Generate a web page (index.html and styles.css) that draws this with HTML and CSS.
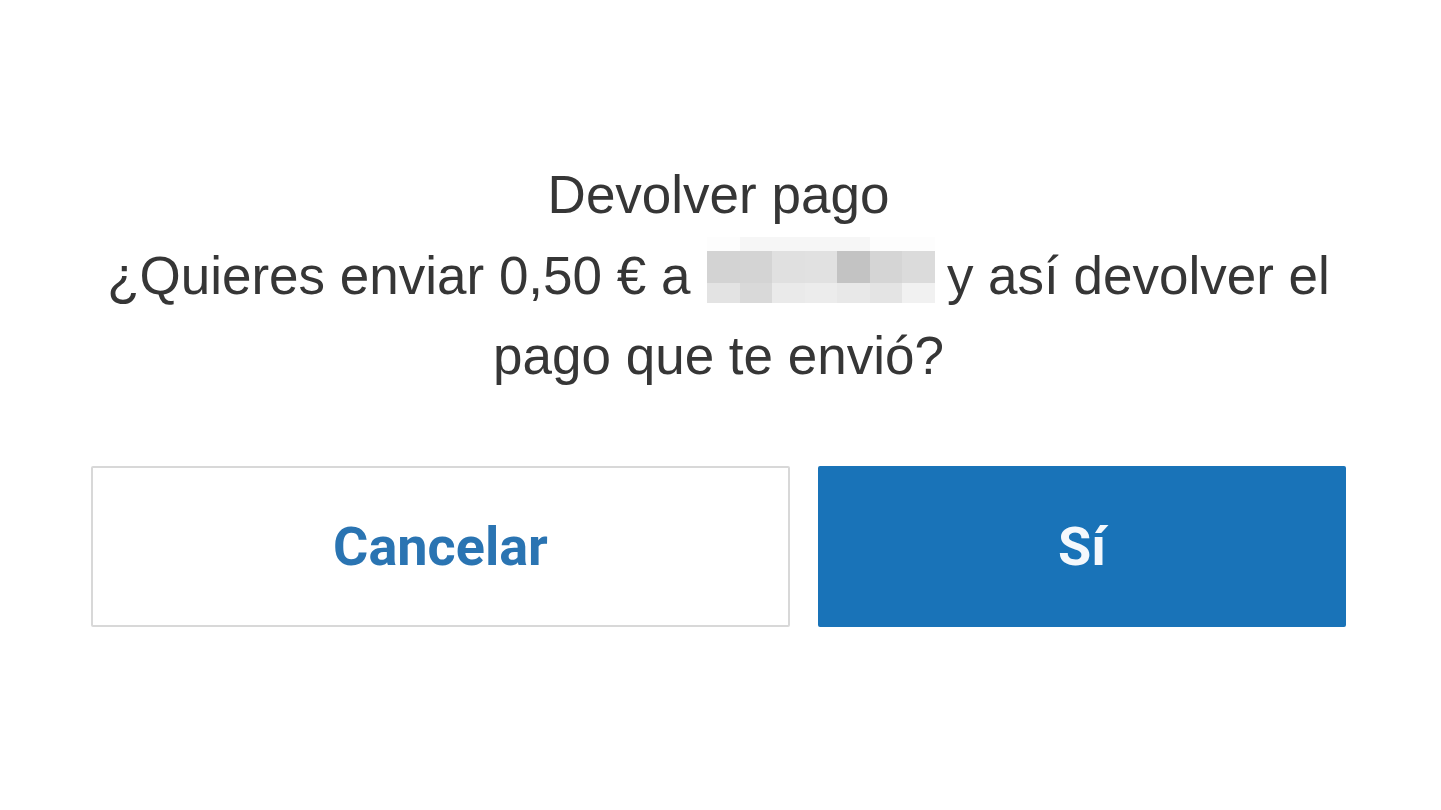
FILE: index.html
```html
<!DOCTYPE html>
<html lang="es">
<head>
<meta charset="utf-8">
<title>Devolver pago</title>
<link rel="stylesheet" href="styles.css">
</head>
<body>
<main class="dialog">
  <h1 class="title">Devolver pago</h1>
  <p class="message">¿Quieres enviar 0,50 € a <span class="blur"><span class="blur-grid"><span class="px t1"></span><span class="px t2"></span><span class="px t2"></span><span class="px t2"></span><span class="px t2"></span><span class="px t1"></span><span class="px t1"></span><span class="px a1"></span><span class="px a2"></span><span class="px a3"></span><span class="px a4"></span><span class="px a5"></span><span class="px a6"></span><span class="px a7"></span><span class="px b1"></span><span class="px b2"></span><span class="px b3"></span><span class="px b4"></span><span class="px b5"></span><span class="px b6"></span><span class="px b7"></span></span></span> y así devolver el pago que te envió?</p>
  <div class="actions">
    <button class="btn btn-secondary" type="button">Cancelar</button>
    <button class="btn btn-primary" type="button">Sí</button>
  </div>
</main>
</body>
</html>
```

FILE: styles.css
```css
html, body {
  margin: 0;
  padding: 0;
  background: #ffffff;
}

body {
  font-family: "Liberation Sans", Arial, sans-serif;
  color: #363636;
}

.dialog {
  width: 1255px;
  margin-left: 91px;
  padding-top: 154px;
}

.title {
  margin: 0;
  font-size: 53px;
  font-weight: 400;
  line-height: 82px;
  text-align: center;
}

.message {
  margin: 0;
  font-size: 53px;
  line-height: 80px;
  text-align: center;
}

.blur {
  display: inline-block;
  width: 228px;
  height: 66px;
  overflow: hidden;
  vertical-align: -9px;
  margin: 0 -3px 0 2px;
}

.blur-grid {
  display: grid;
  grid-template-columns: repeat(7, 32.5px);
  grid-template-rows: 14px 32px 20px;
  height: 66px;
}

.px { display: block; }
.t1 { background: #fdfdfd; }
.t2 { background: #f6f6f6; }
.a1 { background: #d3d3d3; }
.a2 { background: #d4d4d4; }
.a3 { background: #e0e0e0; }
.a4 { background: #e1e1e1; }
.a5 { background: #c3c3c3; }
.a6 { background: #d5d5d5; }
.a7 { background: #dbdbdb; }
.b1 { background: #e3e3e3; }
.b2 { background: #d9d9d9; }
.b3 { background: #eaeaea; }
.b4 { background: #ececec; }
.b5 { background: #e8e8e8; }
.b6 { background: #e4e4e4; }
.b7 { background: #f1f1f1; }

.actions {
  display: grid;
  grid-template-columns: 699px 528px;
  column-gap: 28px;
  margin-top: 70px;
}

.btn {
  height: 161px;
  margin: 0;
  padding: 0;
  font-family: Roboto, "Liberation Sans", Arial, sans-serif;
  font-size: 54px;
  font-weight: 700;
  border-radius: 2px;
  cursor: pointer;
}

.btn-secondary {
  background: #ffffff;
  border: 2px solid #d8d8d8;
  color: #2a74b2;
}

.btn-primary {
  background: #1973b8;
  border: 2px solid #1973b8;
  color: #f4f8fc;
}
```
